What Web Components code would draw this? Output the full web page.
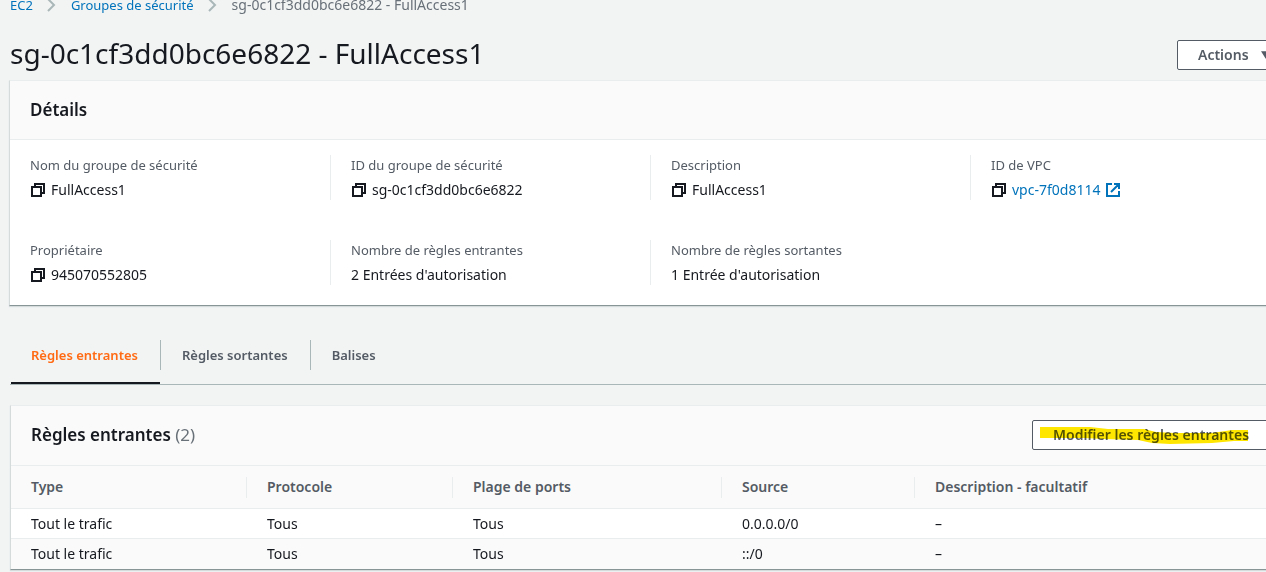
<!DOCTYPE html>
<html lang="fr">
<head>
<meta charset="utf-8">
<title>Groupe de sécurité | EC2</title>
<style>
  html, body { margin: 0; }
  body {
    background: #f2f4f4;
    color: #16191f;
    font: 14px/20px "Noto Sans", "Open Sans", sans-serif;
    overflow: hidden;
  }
</style>
</head>
<body>
<security-group-page></security-group-page>

<script>
const define = (name, html, setup) => {
  const template = document.createElement('template');
  template.innerHTML = `<style>*, *::before { box-sizing: border-box; } a { color: #0073bb; text-decoration: none; }</style>${html}`;
  customElements.define(name, class extends HTMLElement {
    constructor() {
      super();
      this.attachShadow({ mode: 'open' }).append(template.content.cloneNode(true));
    }
    connectedCallback() { if (setup) setup(this, this.shadowRoot); }
  });
};

define('bread-crumbs', `
  <style>
    :host { display: block; font-size: 13px; }
    nav { display: flex; align-items: center; gap: 13px; }
    span { color: #687078; font-size: 14px; }
    svg { width: 12px; height: 14px; fill: none; stroke: #aab7b8; stroke-width: 2; }
  </style>
  <nav aria-label="Fil d'Ariane">
    <a href="#ec2">EC2</a>
    <svg viewBox="0 0 12 14"><path d="M2 1l6 6-6 6"/></svg>
    <a href="#groups">Groupes de sécurité</a>
    <svg viewBox="0 0 12 14"><path d="M2 1l6 6-6 6"/></svg>
    <span>sg-0c1cf3dd0bc6e6822 - FullAccess1</span>
  </nav>`);

define('action-button', `
  <style>
    :host { display: block; position: relative; }
    button {
      display: flex; align-items: center; gap: 12px; width: 100%; height: 30px;
      margin: 0; padding: 0 20px; border: 1px solid #545b64; border-radius: 2px;
      background: #fff; color: #545b64; font: inherit; font-weight: 600; text-align: left;
      white-space: nowrap;
    }
  </style>
  <button type="button"><slot></slot></button>
  <slot name="over"></slot>`);

define('copy-icon', `
  <style>
    :host { display: block; flex: none; width: 16px; height: 16px; }
    button { display: block; padding: 0; border: 0; background: none; color: inherit; }
    svg { display: block; fill: none; stroke: currentColor; stroke-width: 2; }
  </style>
  <button type="button" aria-label="Copier"><svg width="16" height="16" viewBox="0 0 16 16">
    <path d="M2 5h9v9H2zM5 5V2h9v9h-3"/></svg></button>`);

define('key-value', `
  <style>
    :host { display: flex; flex-direction: column; gap: 5px; padding: 0 20px; }
    :host([divided]) { border-left: 1px solid #eaeded; }
    .label { color: #545b64; font-size: 13px; }
    .value { display: flex; align-items: center; gap: 5px; }
  </style>
  <div class="label"></div>
  <div class="value"><slot></slot></div>`,
  (host, root) => { root.querySelector('.label').textContent = host.getAttribute('label'); });

define('content-panel', `
  <style>
    :host {
      display: block; background: #fff;
      border: 1px solid #d5dbdb; border-top-color: #eaeded; border-bottom-color: #879596;
      box-shadow: 0 1px 1px #d5dbdb;
    }
    header {
      display: flex; align-items: center; justify-content: space-between;
      padding: 14px 20px 15px; min-height: var(--head, 59px);
      background: #fafafa; border-bottom: 1px solid #eaeded;
    }
    h2 { margin: 0; font-size: 17px; line-height: 22px; font-weight: 600; }
  </style>
  <header><h2><slot name="title"></slot></h2><slot name="actions"></slot></header>
  <slot></slot>`);

define('tab-strip', `
  <style>
    :host { display: block; border-bottom: 1px solid #aab7b8; }
    div { display: flex; padding-left: 1px; }
    button {
      position: relative; height: 58px; margin: 0; padding: 0 22px; border: 0;
      background: none; color: #545b64; font: inherit; font-size: 13px; font-weight: 600;
    }
    button + button::before {
      content: ""; position: absolute; left: 0; top: 14px; width: 1px; height: 30px; background: #aab7b8;
    }
    button[aria-selected=true] { padding-left: 20px; color: #ff6a13; box-shadow: inset 0 -2px #16191f; }
  </style>
  <div role="tablist">
    <button role="tab" aria-selected="true">Règles entrantes</button>
    <button role="tab" aria-selected="false">Règles sortantes</button>
    <button role="tab" aria-selected="false">Balises</button>
  </div>`);

define('rules-table', `
  <style>
    :host { display: block; }
    table { width: 100%; border-collapse: separate; border-spacing: 0; table-layout: fixed; }
    th, td { padding: 0 20px; text-align: left; }
    th { position: relative; height: 43px; background: #fafafa; color: #545b64; font-weight: 600; border-bottom: 1px solid #eaeded; }
    th:not(:last-child)::before {
      content: ""; position: absolute; right: 0; top: 11px; width: 1px; height: 21px; background: #eaeded;
    }
    td { height: 30px; }
    tr:first-child td { border-bottom: 1px solid #eaeded; }
    tbody tr:nth-child(even) { background: #fafafa; }
  </style>
  <table>
    <colgroup><col style="width:236px"><col style="width:206px"><col style="width:269px"><col style="width:193px"><col></colgroup>
    <thead><tr><th scope="col">Type</th><th scope="col">Protocole</th><th scope="col">Plage de ports</th><th scope="col">Source</th><th scope="col">Description - facultatif</th></tr></thead>
    <tbody>
      <tr><td>Tout le trafic</td><td>Tous</td><td>Tous</td><td>0.0.0.0/0</td><td>–</td></tr>
      <tr><td>Tout le trafic</td><td>Tous</td><td>Tous</td><td>::/0</td><td>–</td></tr>
    </tbody>
  </table>`);

define('security-group-page', `
  <style>
    :host { display: block; overflow: hidden; }
    main { margin: -5px -25px 0 9px; padding-bottom: 8px; }
    bread-crumbs { padding-left: 1px; }
    .top { display: flex; align-items: flex-start; justify-content: space-between; padding: 20px 0 5px 1px; min-height: 65px; }
    h1 { margin: 0; font-size: 28px; line-height: 36px; font-weight: 400; }
    .top action-button { width: 114px; margin-top: 5px; }
    .caret { width: 10px; height: 8px; fill: currentColor; }
    .details { display: grid; grid-template-columns: repeat(4, 1fr); row-gap: 40px; padding: 15px 0 20px; }
    .rules { margin-left: 1px; }
    tab-strip { margin: 20px 0 20px; }
    .rules content-panel { --head: 60px; }
    .rules action-button { width: 238px; }
    .count { color: #687078; font-weight: 400; }
    .marker { position: absolute; left: 8px; top: 6px; mix-blend-mode: multiply; pointer-events: none; }
    .vpc { display: flex; align-items: center; gap: 5px; }
  </style>
  <main>
    <bread-crumbs></bread-crumbs>
    <div class="top">
      <h1>sg-0c1cf3dd0bc6e6822 - FullAccess1</h1>
      <action-button>Actions <svg class="caret" viewBox="0 0 10 8"><path d="M0 0h10L5 8z"/></svg></action-button>
    </div>
    <content-panel>
      <span slot="title">Détails</span>
      <div class="details">
        <key-value label="Nom du groupe de sécurité"><copy-icon></copy-icon>FullAccess1</key-value>
        <key-value divided label="ID du groupe de sécurité"><copy-icon></copy-icon>sg-0c1cf3dd0bc6e6822</key-value>
        <key-value divided label="Description"><copy-icon></copy-icon>FullAccess1</key-value>
        <key-value divided label="ID de VPC"><copy-icon></copy-icon><a class="vpc" href="#vpc">vpc-7f0d8114
          <svg width="16" height="16" viewBox="0 0 16 16" fill="none" stroke="currentColor" stroke-width="2"><path d="M7 2H2v12h12V9M9 2h5v5M14 2L6 10"/></svg></a></key-value>
        <key-value label="Propriétaire"><copy-icon></copy-icon>945070552805</key-value>
        <key-value divided label="Nombre de règles entrantes">2 Entrées d'autorisation</key-value>
        <key-value divided label="Nombre de règles sortantes">1 Entrée d'autorisation</key-value>
      </div>
    </content-panel>
    <div class="rules">
      <tab-strip></tab-strip>
      <content-panel>
        <span slot="title">Règles entrantes <span class="count">(2)</span></span>
        <action-button slot="actions">Modifier les règles entrantes
          <svg slot="over" class="marker" width="208" height="20" viewBox="0 0 208 20"><path fill="#ffe600" d="M0 1h50l18 2 36 0 12 3 18 1h38l20-3 16 0v11h-14l-22 2-42 1-18-1-14-3-34-1-20-1H0z"/></svg>
        </action-button>
        <rules-table></rules-table>
      </content-panel>
    </div>
  </main>`);
</script>
</body>
</html>
